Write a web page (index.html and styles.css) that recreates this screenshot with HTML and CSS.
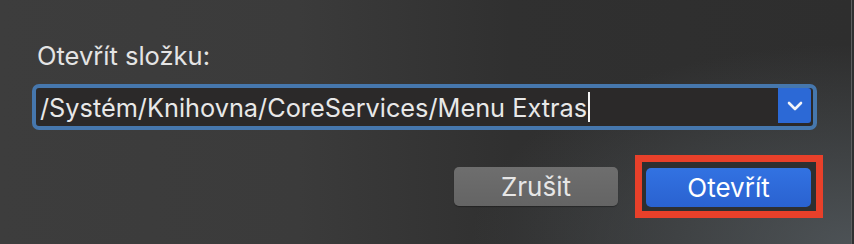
FILE: index.html
```html
<!DOCTYPE html>
<html>
<head>
<meta charset="utf-8">
<link rel="stylesheet" href="styles.css">
</head>
<body>
<div class="window">
  <div class="label">Otevřít složku:</div>
  <div class="combo">
    <div class="value">/Systém/Knihovna/CoreServices/Menu Extras<span class="caret"></span></div>
    <div class="arrow">
      <svg width="16" height="10" viewBox="0 0 16 10"><path d="M2 2 L8 8 L14 2" fill="none" stroke="#f2f4f8" stroke-width="2.6" stroke-linecap="round" stroke-linejoin="round"/></svg>
    </div>
  </div>
  <div class="buttons">
    <div class="btn cancel">Zrušit</div>
    <div class="highlight">
      <div class="btn primary">Otevřít</div>
    </div>
  </div>
</div>
</body>
</html>
```

FILE: styles.css
```css
html, body {
  margin: 0;
  padding: 0;
  width: 854px;
  height: 244px;
  overflow: hidden;
  background: #2f3031;
}
.window {
  box-sizing: border-box;
  width: 852px;
  height: 244px;
  border-right: 1px solid #5e5f60;
  padding: 40px 28px 0 32px;
  display: flex;
  flex-direction: column;
  font-family: Inter, "Liberation Sans", sans-serif;
  background:
    radial-gradient(ellipse 380px 200px at 100% 100%, rgba(80,86,90,0.9), rgba(80,86,90,0) 100%),
    linear-gradient(90deg, #3d3d3d 0%, #3b3b3b 35%, #303030 60%, #2e2e2e 100%);
}
.label {
  margin-left: 5px;
  font-size: 25.5px;
  line-height: 32px;
  color: #e4e4e4;
}
.combo {
  margin-top: 12px;
  box-sizing: border-box;
  width: 785px;
  height: 46px;
  border: 4px solid #4677ad;
  border-radius: 7px;
  background: #2b2929;
  display: flex;
  align-items: flex-start;
}
.value {
  flex: 1;
  padding-left: 4px;
  height: 38px;
  display: flex;
  align-items: center;
  font-size: 25.3px;
  color: #e8e8e8;
  white-space: nowrap;
}
.caret {
  display: inline-block;
  width: 2px;
  height: 30px;
  background: #f4f4f4;
  margin-left: 1px;
}
.arrow {
  width: 33px;
  height: 35px;
  margin-right: 2px;
  background: #2c69d6;
  border-radius: 0 3px 3px 0;
  display: flex;
  align-items: center;
  justify-content: center;
}
.buttons {
  margin-top: 25px;
  display: flex;
  justify-content: flex-end;
  align-items: center;
  gap: 17px;
}
.btn {
  box-sizing: border-box;
  width: 164px;
  height: 39px;
  border-radius: 5px;
  display: flex;
  align-items: center;
  justify-content: center;
  font-size: 26px;
}
.cancel {
  background: linear-gradient(#6e6e6e, #646464);
  color: #e6e6e6;
  box-shadow: 0 1px 1px rgba(0,0,0,0.3);
}
.highlight {
  border: 7px solid #e8402a;
  background: #2e2f30;
  padding: 6px 5px 4px 4px;
}
.primary {
  width: 165px;
  background: linear-gradient(#3272e2, #2a62d0);
  color: #ffffff;
}
```
